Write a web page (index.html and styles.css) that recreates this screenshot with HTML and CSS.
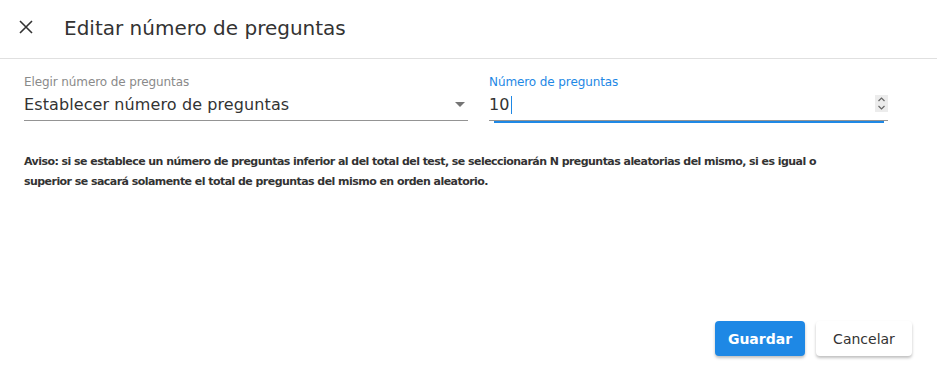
FILE: index.html
```html
<!DOCTYPE html>
<html>
<head>
  <meta charset="utf-8">
  <link rel="stylesheet" href="styles.css">
  <title>Editar número de preguntas</title>
</head>
<body>
  <div class="dialog">
    <div class="dialog-header">
      <button class="close-btn" aria-label="Cerrar">
        <svg width="14" height="14" viewBox="0 0 14 14">
          <path d="M1 1 L13 13 M13 1 L1 13" stroke="#333" stroke-width="1.6" fill="none"/>
        </svg>
      </button>
      <h2 class="dialog-title">Editar número de preguntas</h2>
    </div>

    <div class="dialog-content">
      <div class="fields">
        <div class="field">
          <label class="field-label">Elegir número de preguntas</label>
          <div class="field-input select">
            <span class="field-value">Establecer número de preguntas</span>
            <span class="select-arrow"></span>
          </div>
        </div>

        <div class="field focused">
          <label class="field-label">Número de preguntas</label>
          <div class="field-input number">
            <span class="field-value">10<span class="caret"></span></span>
            <span class="spinner">
              <svg width="13" height="17" viewBox="0 0 13 17">
                <path d="M3.5 6 L6.5 3 L9.5 6 M3.5 11 L6.5 14 L9.5 11" stroke="#666" stroke-width="1.2" fill="none"/>
              </svg>
            </span>
          </div>
        </div>
      </div>

      <p class="notice">Aviso: si se establece un número de preguntas inferior al del total del test, se seleccionarán N preguntas aleatorias del mismo, si es igual o superior se sacará solamente el total de preguntas del mismo en orden aleatorio.</p>
    </div>

    <div class="dialog-actions">
      <button class="btn btn-primary">Guardar</button>
      <button class="btn btn-secondary">Cancelar</button>
    </div>
  </div>
</body>
</html>
```

FILE: styles.css
```css
body {
  margin: 0;
  padding: 0;
  background-color: #fff;
  font-family: "DejaVu Sans", "Noto Sans", sans-serif;
  color: #333;
}

.dialog {
  display: flex;
  flex-direction: column;
  height: 369px;
}

.dialog-header {
  display: flex;
  align-items: center;
  height: 59px;
  border-bottom: 1px solid #e0e0e0;
  padding-left: 19px;
  box-sizing: border-box;
}

.close-btn {
  display: flex;
  padding: 0;
  margin: -4px 31px 0 0;
  background: none;
  border: none;
  cursor: pointer;
}

.dialog-title {
  margin: -2px 0 0 0;
  font-size: 20px;
  font-weight: normal;
  color: #333;
  line-height: 24px;
}

.dialog-content {
  padding: 16px 25px 0 24px;
  flex: 1;
}

.fields {
  display: grid;
  grid-template-columns: 444px 399px;
  column-gap: 21px;
}

.field-label {
  display: block;
  font-size: 12px;
  line-height: 14px;
  color: #8a8a8a;
  letter-spacing: -0.1px;
}

.focused .field-label {
  color: #1e88e5;
}

.field-input {
  display: flex;
  align-items: center;
  justify-content: space-between;
  height: 31px;
  border-bottom: 1px solid #949494;
  position: relative;
}

.field-value {
  font-size: 16px;
  color: #333;
  letter-spacing: 0.1px;
  display: flex;
  align-items: center;
}

.caret {
  display: inline-block;
  width: 1px;
  height: 18px;
  background-color: #1e88e5;
  margin-left: 1px;
}

.select-arrow {
  width: 0;
  height: 0;
  border-left: 5px solid transparent;
  border-right: 5px solid transparent;
  border-top: 5px solid #757575;
  margin-right: 3px;
}

.spinner {
  display: flex;
  background-color: #ececec;
  margin-top: -2px;
}

.number::after {
  content: "";
  position: absolute;
  left: 5px;
  right: 4px;
  bottom: -3px;
  height: 2px;
  background-color: #1e88e5;
}

.notice {
  max-width: 830px;
  margin: 31px 0 0 0;
  font-size: 11px;
  font-weight: bold;
  line-height: 20px;
  color: #333;
  letter-spacing: -0.55px;
}

.dialog-actions {
  display: flex;
  justify-content: flex-end;
  gap: 11px;
  padding: 0 25px 13px 0;
}

.btn {
  height: 35px;
  border: none;
  border-radius: 4px;
  font-family: "DejaVu Sans", "Noto Sans", sans-serif;
  font-size: 14px;
  cursor: pointer;
  box-shadow: 0 2px 3px rgba(0, 0, 0, 0.25);
}

.btn-primary {
  width: 90px;
  background-color: #1e88e5;
  color: #fff;
  font-weight: bold;
}

.btn-secondary {
  width: 96px;
  background-color: #fff;
  color: #333;
}
```
